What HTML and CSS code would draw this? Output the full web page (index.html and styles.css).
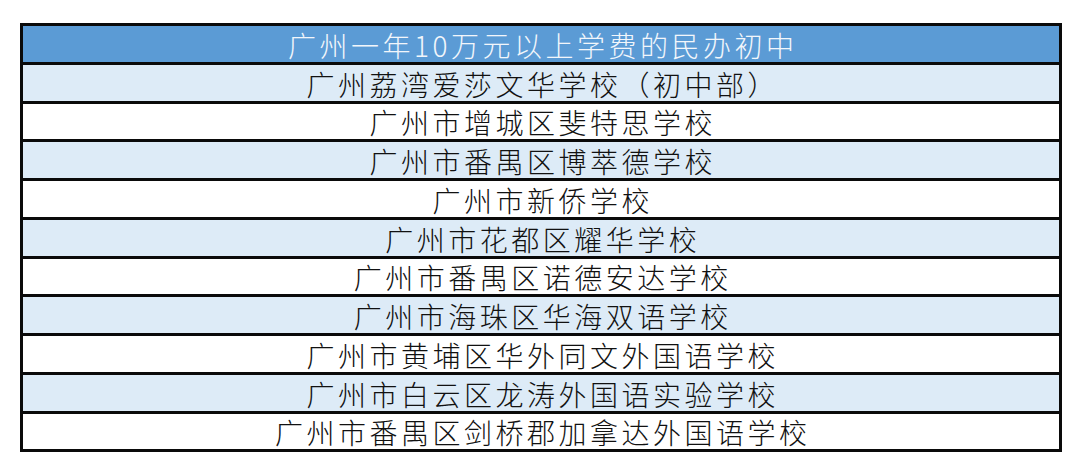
FILE: index.html
```html
<!DOCTYPE html>
<html lang="zh-CN">
<head>
<meta charset="utf-8">
<title>广州一年10万元以上学费的民办初中</title>
<link rel="stylesheet" href="styles.css">
</head>
<body>
<div class="table">
  <div class="row head">广州一年10万元以上学费的民办初中</div>
  <div class="row alt">广州荔湾爱莎文华学校（初中部）</div>
  <div class="row">广州市增城区斐特思学校</div>
  <div class="row alt">广州市番禺区博萃德学校</div>
  <div class="row">广州市新侨学校</div>
  <div class="row alt">广州市花都区耀华学校</div>
  <div class="row">广州市番禺区诺德安达学校</div>
  <div class="row alt">广州市海珠区华海双语学校</div>
  <div class="row">广州市黄埔区华外同文外国语学校</div>
  <div class="row alt">广州市白云区龙涛外国语实验学校</div>
  <div class="row">广州市番禺区剑桥郡加拿达外国语学校</div>
</div>
</body>
</html>
```
FILE: styles.css
```css
html, body {
  margin: 0;
  padding: 0;
  background: #ffffff;
}
body {
  padding: 23px 0 0 20px;
  font-family: "Noto Sans CJK SC", "Noto Sans", sans-serif;
}
.table {
  width: 1042px;
  box-sizing: border-box;
  border: 3px solid #0a0a0a;
  display: flex;
  flex-direction: column;
}
.row {
  box-sizing: border-box;
  height: 38.75px;
  display: flex;
  align-items: center;
  justify-content: center;
  padding: 2px 0 0 3.5px;
  font-size: 28px;
  font-weight: 300;
  letter-spacing: 3.5px;
  color: #111111;
  background: #ffffff;
  line-height: 1;
  white-space: nowrap;
}
.row + .row {
  border-top: 3px solid #0a0a0a;
}
.row.head {
  height: 35.75px;
  background: #5b9bd5;
  color: #f2f6fb;
}
.row.alt {
  background: #ddebf7;
}
```
